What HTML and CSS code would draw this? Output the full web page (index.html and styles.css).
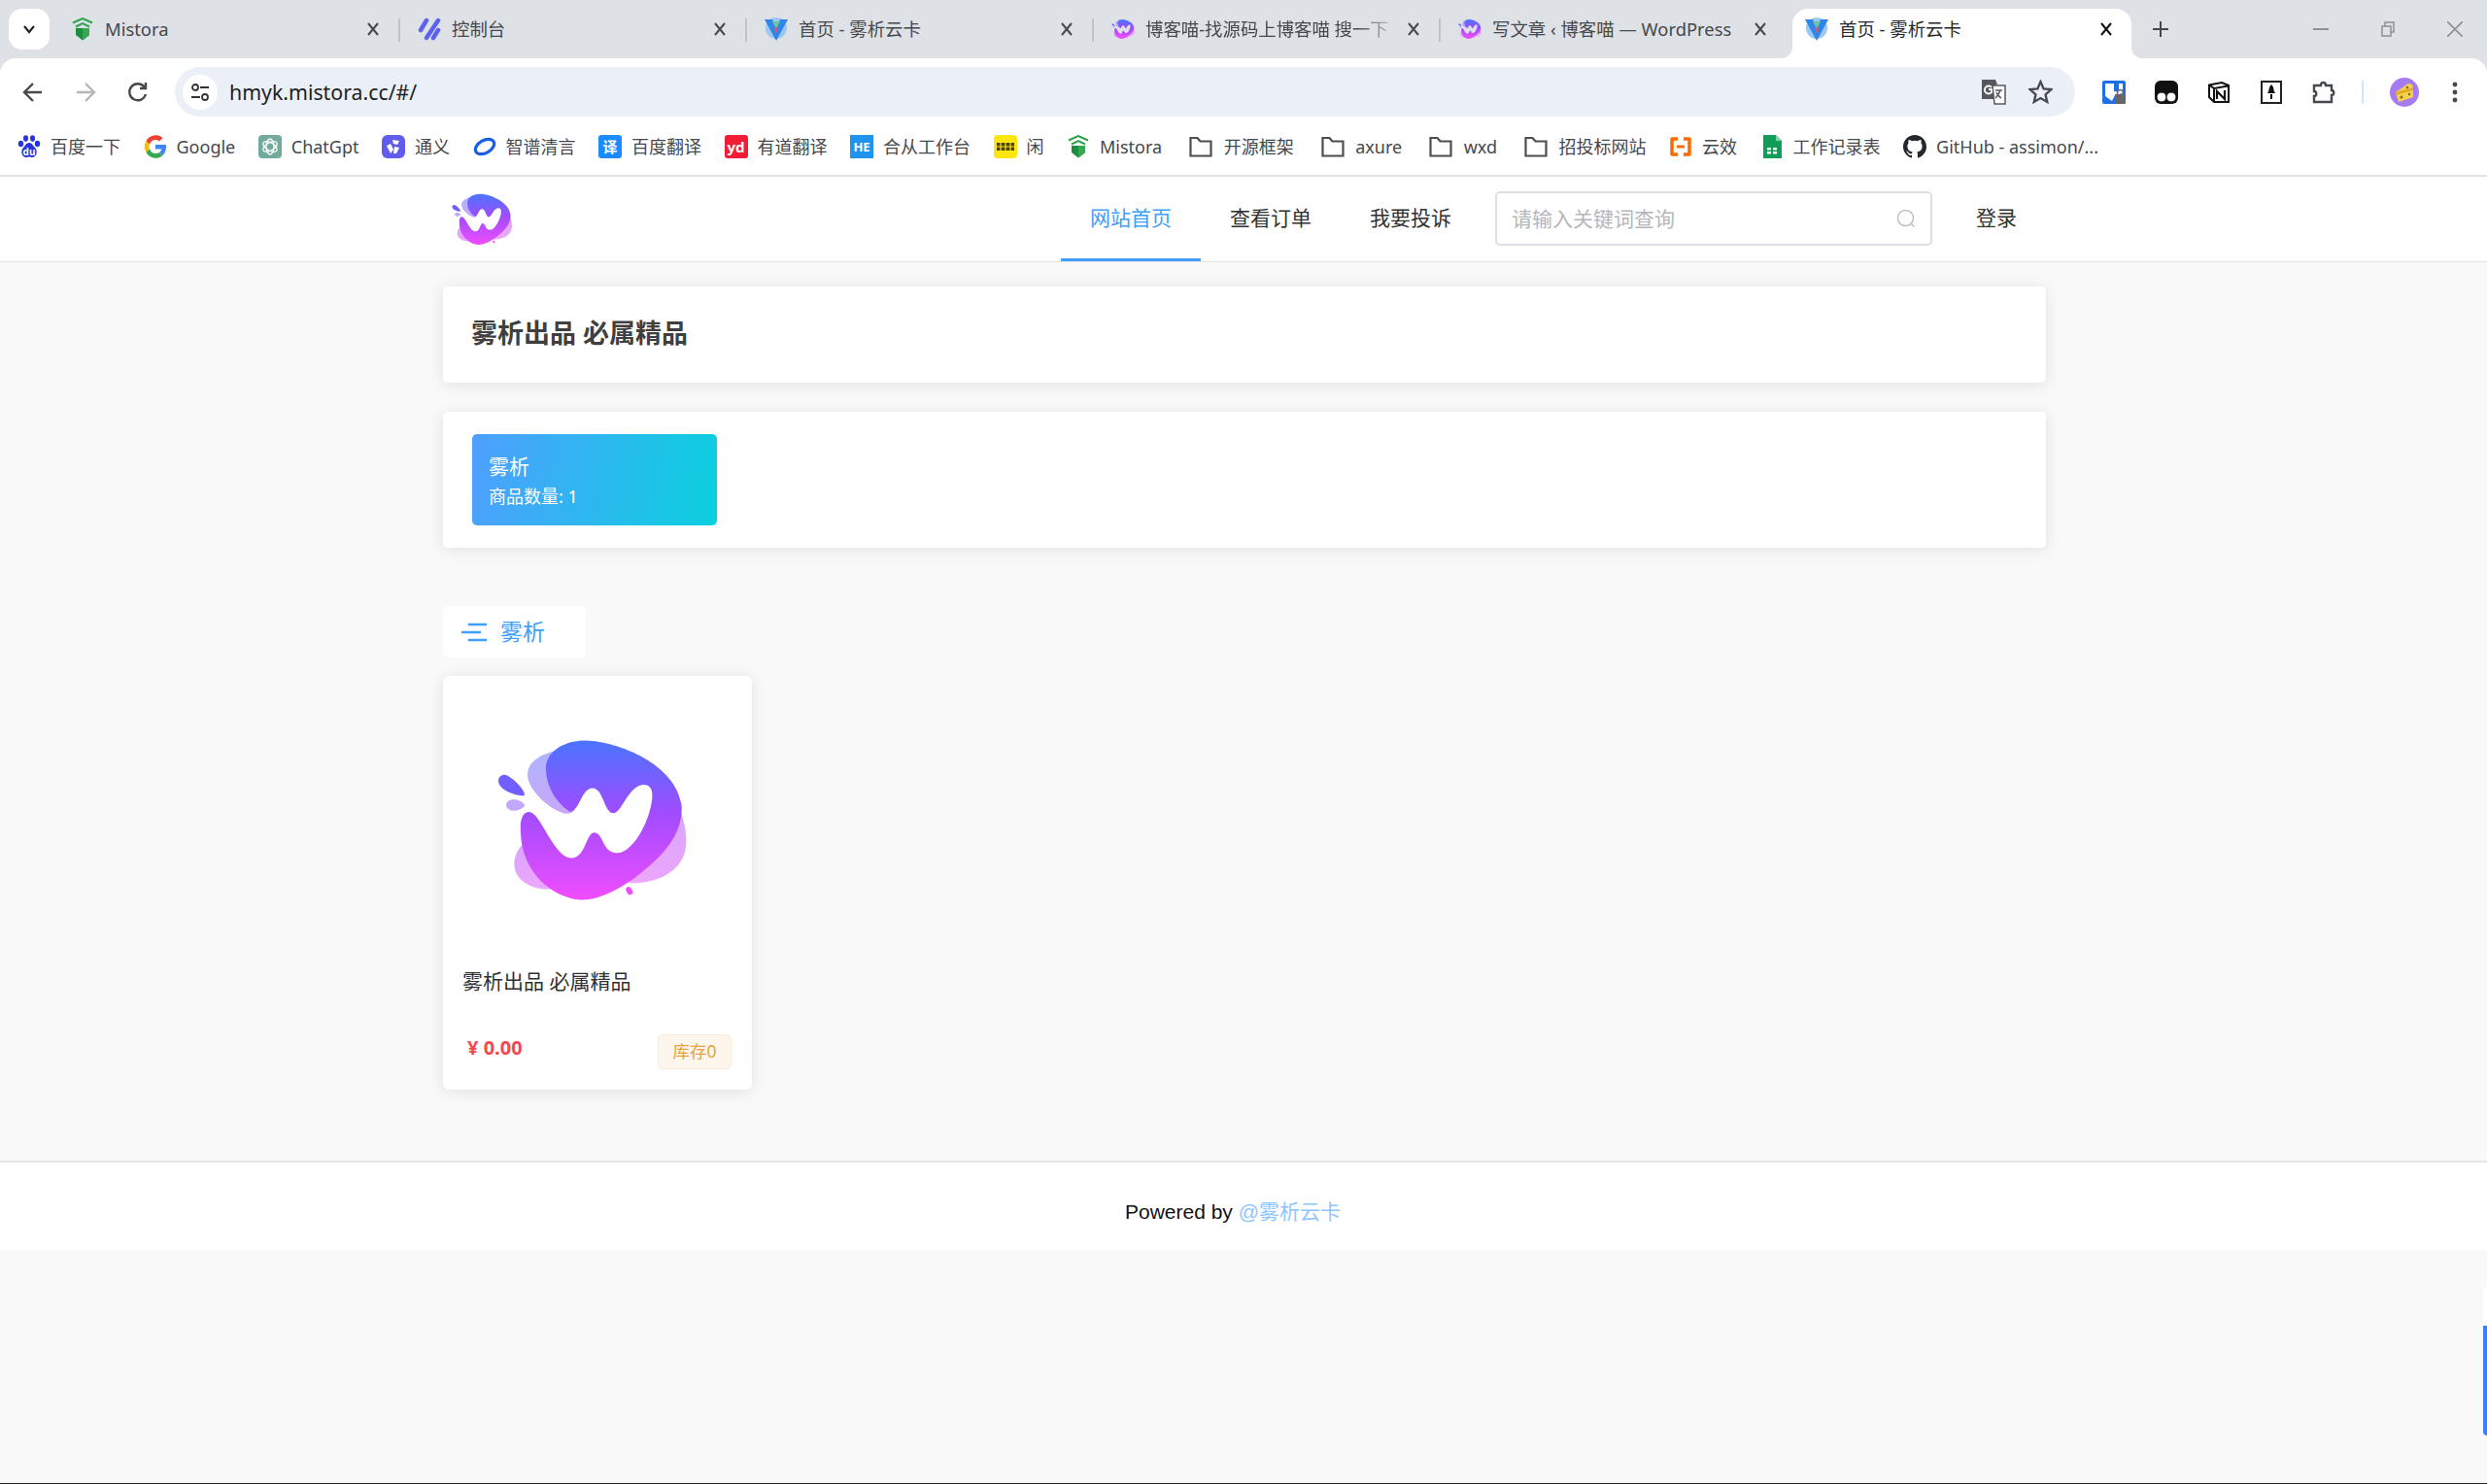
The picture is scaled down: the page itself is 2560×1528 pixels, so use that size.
FILE: index.html
```html
<!DOCTYPE html>
<html lang="zh-CN">
<head>
  <meta charset="UTF-8" />
  <title>首页 - 雾析云卡</title>
  <link rel="stylesheet" href="styles.css">
</head>
<body>
  <svg class="defs" width="0" height="0">
    <defs>
      <linearGradient id="wMain" x1="0" y1="0" x2="0" y2="1">
        <stop offset="0" stop-color="#4a74ff"/>
        <stop offset="0.45" stop-color="#a04cff"/>
        <stop offset="1" stop-color="#f04dff"/>
      </linearGradient>
      <linearGradient id="wBackTop" x1="0" y1="0" x2="0" y2="1">
        <stop offset="0" stop-color="#b0b3ff"/>
        <stop offset="1" stop-color="#c6a8fa"/>
      </linearGradient>
      <linearGradient id="wBackBottom" x1="0" y1="0" x2="0" y2="1">
        <stop offset="0" stop-color="#d8a6fb"/>
        <stop offset="1" stop-color="#eca6fd"/>
      </linearGradient>
      <symbol id="wLogo" viewBox="180 210 595 510">
        <path fill="url(#wBackTop)" d="M360 250C315 262 280 285 279 322C280 370 345 430 395 443C410 445 420 440 425 430L360 250Z"/>
        <path fill="url(#wBackBottom)" d="M750 430C770 480 775 530 765 565C745 630 670 662 590 658L700 540Z"/>
        <path fill="url(#wBackBottom)" d="M268 535C250 550 238 575 238 600C240 650 290 680 355 677L310 600Z"/>
        <path fill="url(#wMain)" d="M410 437C360 405 335 350 336 300C340 240 410 215 460 217C560 220 740 290 756 420C760 520 680 590 600 650C540 690 490 712 440 710C350 700 260 620 258 500C255 460 265 438 285 438C320 440 360 580 415 581C460 580 460 500 487 502C515 505 510 565 555 565C610 565 665 450 665 385C665 360 650 352 635 354C590 360 570 442 545 442C515 440 515 365 480 364C445 365 440 437 410 437Z"/>
        <path fill="#7160ff" d="M189 342C189 326 205 319 218 326C242 340 265 365 270 382C272 390 260 388 245 385C215 378 189 362 189 342Z"/>
        <path fill="#c4a8fb" d="M213 416C213 404 228 398 243 400C256 403 268 410 271 418C265 428 250 435 235 434C222 433 213 426 213 416Z"/>
        <ellipse fill="#ee4dff" cx="594" cy="682" rx="9" ry="13" transform="rotate(-30 594 682)"/>
      </symbol>
      <symbol id="shield" viewBox="0 0 24 24">
        <path fill="#1e8e3e" d="M5 11h14v7l-7 5.500L5 18z"/>
        <path fill="#37a655" d="M12 11h7v7l-7 5.500z"/>
        <path fill="none" stroke="#2fa24c" stroke-width="2" d="M2 5.500 12 1l10 4.500M5 9.500 12 6l7 3.500"/>
      </symbol>
      <symbol id="vue" viewBox="0 0 24 24">
        <circle cx="12" cy="11" r="11" fill="#9cc8f2"/>
        <path fill="#2f86ea" d="M0 2h8l4 9 4-9h8L12 24z"/>
        <path fill="#6fc3a0" d="M8 4h8l-4 8z"/>
        <path fill="#ef5350" d="M12 9l1.500 3-1.500 5-1.500-5z"/>
      </symbol>
      <symbol id="close" viewBox="0 0 12 14">
        <path fill="none" stroke="currentColor" stroke-width="2" d="M1 1l10 12M11 1 1 13"/>
      </symbol>
      <symbol id="folder" viewBox="0 0 24 24">
        <path fill="none" stroke="#4a4d51" stroke-width="2.200" d="M1.500 3h7l3 3.500h11v15h-21z"/>
      </symbol>
    </defs>
  </svg>

  <div class="page">
    <div class="browser">
      <div class="tabstrip">
        <div class="tab-search">
          <svg viewBox="0 0 14 10" width="14" height="10"><path fill="none" stroke="#222" stroke-width="2.200" d="M2 2l5 6 5-6"/></svg>
        </div>

        <div class="tab">
          <svg class="favicon"><use href="#shield"/></svg>
          <span class="tab-title">Mistora</span>
          <svg class="tab-close"><use href="#close"/></svg>
        </div>
        <i class="tab-sep"></i>

        <div class="tab">
          <svg class="favicon" viewBox="0 0 24 24"><path stroke="#5d63ee" stroke-width="4.500" stroke-linecap="round" fill="none" d="M3 13 9 3M9 21 21 3M16 21l5-8"/></svg>
          <span class="tab-title">控制台</span>
          <svg class="tab-close"><use href="#close"/></svg>
        </div>
        <i class="tab-sep"></i>

        <div class="tab">
          <svg class="favicon"><use href="#vue"/></svg>
          <span class="tab-title">首页 - 雾析云卡</span>
          <svg class="tab-close"><use href="#close"/></svg>
        </div>
        <i class="tab-sep"></i>

        <div class="tab">
          <svg class="favicon"><use href="#wLogo"/></svg>
          <span class="tab-title tab-fade">博客喵-找源码上博客喵 搜一下</span>
          <svg class="tab-close"><use href="#close"/></svg>
        </div>
        <i class="tab-sep"></i>

        <div class="tab">
          <svg class="favicon"><use href="#wLogo"/></svg>
          <span class="tab-title">写文章 ‹ 博客喵 — WordPress</span>
          <svg class="tab-close"><use href="#close"/></svg>
        </div>
        <i class="tab-sep hidden"></i>

        <div class="tab active">
          <svg class="favicon"><use href="#vue"/></svg>
          <span class="tab-title">首页 - 雾析云卡</span>
          <svg class="tab-close"><use href="#close"/></svg>
        </div>

        <svg class="tab-new" viewBox="0 0 16 16"><path fill="none" stroke="#45484c" stroke-width="2" d="M8 0v16M0 8h16"/></svg>

        <div class="win-controls">
          <svg viewBox="0 0 16 16" width="16" height="16"><path stroke="#8d9095" stroke-width="2" d="M0 8h16"/></svg>
          <svg viewBox="0 0 16 16" width="16" height="16"><path fill="none" stroke="#8d9095" stroke-width="1.500" d="M2 5h9v10H2zM5 5V1h9v10h-3"/></svg>
          <svg viewBox="0 0 16 16" width="16" height="16"><path fill="none" stroke="#8d9095" stroke-width="1.600" d="M0 0l16 16M16 0 0 16"/></svg>
        </div>
      </div>

      <div class="toolbar">
        <div class="nav-btns">
          <svg viewBox="0 0 24 24" width="24" height="24"><path fill="none" stroke="#45484c" stroke-width="2.400" d="M21 12H4M12 3l-9 9 9 9"/></svg>
          <svg viewBox="0 0 24 24" width="24" height="24"><path fill="none" stroke="#b4b6b9" stroke-width="2.400" d="M3 12h17M12 3l9 9-9 9"/></svg>
          <svg viewBox="0 0 24 24" width="24" height="24"><path fill="none" stroke="#45484c" stroke-width="2.400" d="M20 14a8.500 8.500 0 1 1-1.500-7.500M20 2v6h-6"/></svg>
        </div>
        <div class="omnibox">
          <div class="site-info">
            <svg viewBox="0 0 20 20" width="20" height="20"><circle cx="5" cy="5" r="3" fill="none" stroke="#333" stroke-width="1.800"/><path stroke="#333" stroke-width="1.800" d="M10 5h9M1 15h9"/><circle cx="15" cy="15" r="3" fill="none" stroke="#333" stroke-width="1.800"/></svg>
          </div>
          <span class="url">hmyk.mistora.cc/#/</span>
          <div class="omni-actions">
            <svg viewBox="0 0 25 26" width="25" height="26"><path fill="#55585c" d="M0 0h14l2 5h-2l2 5v10H0z"/><path fill="#fff" stroke="#55585c" stroke-width="1.500" d="M11 6h13v19H13z"/><path fill="none" stroke="#fff" stroke-width="1.800" d="M10 8a4 4 0 1 0 0 5V10H7"/><path fill="none" stroke="#55585c" stroke-width="1.500" d="M14 11h7M19 11c-1 4-3 6-5 8M15 13c1 3 3 5 5 6"/></svg>
            <svg viewBox="0 0 24 24" width="25" height="25"><path fill="none" stroke="#45484c" stroke-width="2.200" d="M12 2l3 7 7.500.7-5.700 5 1.700 7.300L12 18.200 5.500 22l1.700-7.300-5.700-5L9 9z"/></svg>
          </div>
        </div>
        <div class="extensions">
          <svg viewBox="0 0 24 24" width="24" height="24"><rect width="24" height="24" rx="2" fill="#1f6fe5"/><path fill="#fff" d="M3 3h18v10l-8 2-3 6-7-5z"/><path fill="#1f6fe5" d="M12 3h5v8h-5z"/><rect x="13" y="14" width="11" height="10" rx="1" fill="#666"/><path fill="none" stroke="#666" stroke-width="1.600" d="M15.500 15v-2.500a3 3 0 0 1 6 0V15"/></svg>
          <svg viewBox="0 0 24 24" width="24" height="24"><rect width="24" height="24" rx="6" fill="#111"/><circle cx="7" cy="17" r="5" fill="#fff" stroke="#111" stroke-width="1"/><circle cx="17" cy="17" r="5" fill="#fff" stroke="#111" stroke-width="1"/></svg>
          <svg viewBox="0 0 24 24" width="24" height="24"><path fill="#fff" stroke="#111" stroke-width="2" d="M2 4.500 15 2l7 3v17H7l-5-5z"/><path stroke="#111" stroke-width="2" fill="none" d="M2 4.500 7 8l15-2.500M7 8v14"/><path stroke="#111" stroke-width="2.200" fill="none" d="M10 19V11l8 8v-9"/></svg>
          <svg viewBox="0 0 24 24" width="24" height="24"><rect x="2" y="1" width="20" height="22" fill="#fff" stroke="#222" stroke-width="2"/><path fill="#111" d="M12 4c2 2 2.500 4 2.500 6l1.500 3H8l1.500-3c0-2 .5-4 2.500-6zM11 14h2v5h-2z"/></svg>
          <svg viewBox="0 0 24 24" width="24" height="24"><path fill="none" stroke="#45484c" stroke-width="2.400" d="M2 5h7c0-4 5-4 5 0h6v5c3 0 3 5 0 5v7H2v-6c3 0 3-5 0-5z"/></svg>
          <i class="ext-sep"></i>
          <svg class="avatar" viewBox="0 0 30 30" width="30" height="30"><circle cx="15" cy="15" r="15" fill="#a77bf0"/><path fill="#f5d04a" d="M6 15 19 6c3 0 5 2 5 4v10L9 25z"/><path fill="#e0ad2a" d="M6 15l18-5v3L6 18z"/><circle cx="18" cy="10" r="1.300" fill="#8d6a14"/><circle cx="20" cy="17" r="1.300" fill="#8d6a14"/><circle cx="12" cy="20" r="1.500" fill="#8d6a14"/></svg>
          <svg class="dots" viewBox="0 0 6 24" width="6" height="24"><circle cx="3" cy="4" r="2.400" fill="#45484c"/><circle cx="3" cy="12" r="2.400" fill="#45484c"/><circle cx="3" cy="20" r="2.400" fill="#45484c"/></svg>
        </div>
      </div>

      <div class="bookmarks">
        <a class="bm"><svg viewBox="0 0 24 24"><ellipse cx="8.500" cy="3.500" rx="2.500" ry="3.300" fill="#2932e1"/><ellipse cx="15.500" cy="3.500" rx="2.500" ry="3.300" fill="#2932e1"/><ellipse cx="3.500" cy="9" rx="2.700" ry="3.300" fill="#2932e1"/><ellipse cx="20.500" cy="9" rx="2.700" ry="3.300" fill="#2932e1"/><path fill="#2932e1" d="M12 8c3 0 4 3 6 5 3 3 2 10-3 10-1.500 0-2-.5-3-.5s-1.500.5-3 .5c-5 0-6-7-3-10 2-2 3-5 6-5z"/><text class="bm-du" x="12" y="21" text-anchor="middle">du</text></svg>百度一下</a>
        <a class="bm"><svg viewBox="0 0 24 24"><path fill="#ea4335" d="M12 5c2 0 3 .7 4 1.500L19.500 3A11 11 0 0 0 2.300 6.500L6 9.500C7 7 9.300 5 12 5z"/><path fill="#fbbc05" d="M2.300 6.500a11 11 0 0 0 0 11L6 14.500a7 7 0 0 1 0-5z"/><path fill="#34a853" d="M12 19c-2.700 0-5-1.800-6-4.500l-3.700 3A11 11 0 0 0 19.500 21l-3.500-3c-1 .7-2.500 1-4 1z"/><path fill="#4285f4" d="M23 12c0-.8 0-1.300-.2-2H12v4.500h6.300c-.4 1.500-1.200 2.700-2.300 3.500l3.500 3C21.700 19 23 16 23 12z"/></svg>Google</a>
        <a class="bm"><svg viewBox="0 0 24 24"><rect width="24" height="24" rx="4" fill="#74aa9c"/><g fill="none" stroke="#fff" stroke-width="1.300"><ellipse cx="12" cy="12" rx="4" ry="8"/><ellipse cx="12" cy="12" rx="4" ry="8" transform="rotate(60 12 12)"/><ellipse cx="12" cy="12" rx="4" ry="8" transform="rotate(120 12 12)"/></g></svg>ChatGpt</a>
        <a class="bm"><svg viewBox="0 0 24 24"><rect width="24" height="24" rx="6" fill="#615ced"/><path fill="#fff" d="M11 5l7 1-2 4-4-1zM5 11l4-2 3 6-3 4zM13 12l5 1-3 6h-3z"/></svg>通义</a>
        <a class="bm"><svg viewBox="0 0 24 24"><ellipse cx="12" cy="12" rx="10.500" ry="6.500" fill="none" stroke="#1c5fe0" stroke-width="3.200" transform="rotate(-30 12 12)"/></svg>智谱清言</a>
        <a class="bm"><b class="bm-box bm-blue">译</b>百度翻译</a>
        <a class="bm"><b class="bm-box bm-red">yd</b>有道翻译</a>
        <a class="bm"><b class="bm-box bm-he">HE</b>合从工作台</a>
        <a class="bm"><svg viewBox="0 0 24 24"><rect width="24" height="24" rx="4" fill="#ffe60f"/><rect x="3" y="8" width="18" height="8" fill="#4a4210"/><path stroke="#ffe60f" stroke-width="1.200" d="M7 8v8M12 8v8M17 8v8M3 12h18"/></svg>闲</a>
        <a class="bm"><svg><use href="#shield"/></svg>Mistora</a>
        <a class="bm bm-folder"><svg><use href="#folder"/></svg>开源框架</a>
        <a class="bm bm-folder"><svg><use href="#folder"/></svg>axure</a>
        <a class="bm bm-folder"><svg><use href="#folder"/></svg>wxd</a>
        <a class="bm bm-folder"><svg><use href="#folder"/></svg>招投标网站</a>
        <a class="bm"><svg viewBox="0 0 24 24"><path fill="none" stroke="#ff6a00" stroke-width="3.500" stroke-linejoin="round" d="M9 4H3v16h6M15 4h6v16h-6"/><path stroke="#ff6a00" stroke-width="3" d="M8 12h8"/></svg>云效</a>
        <a class="bm"><svg viewBox="0 0 24 24"><path fill="#0f9d58" d="M3 0h13l6 6v18H3z"/><path fill="#87ceac" d="M16 0l6 6h-6z"/><path fill="#fff" d="M7 13h4v2.500H7zM13 13h4v2.500h-4zM7 17h4v2.500H7zM13 17h4v2.500h-4z"/></svg>工作记录表</a>
        <a class="bm"><svg viewBox="0 0 24 24"><path fill="#24292f" d="M12 0C5.400 0 0 5.400 0 12c0 5.300 3.400 9.800 8.200 11.400.6.100.8-.3.800-.6v-2c-3.300.7-4-1.600-4-1.600-.5-1.400-1.300-1.800-1.300-1.800-1.100-.7.100-.7.100-.7 1.200.1 1.800 1.200 1.800 1.200 1.100 1.800 2.800 1.300 3.500 1 .1-.8.400-1.300.8-1.600-2.700-.3-5.500-1.300-5.500-5.900 0-1.300.5-2.400 1.200-3.200-.1-.3-.5-1.500.1-3.200 0 0 1-.3 3.300 1.200a11.500 11.500 0 0 1 6 0C17.300 4.700 18.300 5 18.300 5c.7 1.700.2 2.900.1 3.200.8.800 1.200 1.900 1.200 3.200 0 4.600-2.800 5.600-5.500 5.900.4.400.8 1.100.8 2.200v3.300c0 .3.200.7.800.6C20.600 21.800 24 17.300 24 12c0-6.600-5.400-12-12-12z"/></svg>GitHub - assimon/...</a>
      </div>
    </div>

    <header class="site-header">
      <div class="container header-inner">
        <svg class="site-logo"><use href="#wLogo"/></svg>
        <nav class="site-nav">
          <a class="nav-item current">网站首页</a>
          <a class="nav-item">查看订单</a>
          <a class="nav-item">我要投诉</a>
        </nav>
        <div class="search-box">
          <span class="search-text">请输入关键词查询</span>
          <svg viewBox="0 0 20 20" width="20" height="20"><circle cx="9.500" cy="9.500" r="8" fill="none" stroke="#bcbec2" stroke-width="1.500"/><path stroke="#bcbec2" stroke-width="1.500" d="M15 15l3.500 3.500"/></svg>
        </div>
        <a class="login">登录</a>
      </div>
    </header>

    <main class="content">
      <div class="container">
        <div class="card notice">雾析出品 必属精品</div>

        <div class="card groups">
          <div class="group-tile">
            <div class="group-name">雾析</div>
            <div class="group-count">商品数量: 1</div>
          </div>
        </div>

        <div class="cat-label">
          <svg viewBox="0 0 26 20" width="26" height="20"><path stroke="#409eff" stroke-width="2.400" d="M7 2h19M0 10h20M7 18h19"/></svg>
          <span class="cat-text">雾析</span>
        </div>

        <div class="product">
          <svg class="product-logo"><use href="#wLogo"/></svg>
          <div class="product-name">雾析出品 必属精品</div>
          <div class="product-foot">
            <span class="price">¥ 0.00</span>
            <span class="stock">库存0</span>
          </div>
        </div>
      </div>
    </main>

    <footer class="site-footer">Powered by <a class="footer-link">@雾析云卡</a></footer>

    <div class="side-widget"></div>
  </div>
</body>
</html>
```
FILE: styles.css
```css
* { box-sizing: border-box; }
html, body { margin: 0; padding: 0; }
body {
  font-family: "Noto Sans", "Noto Sans CJK SC", sans-serif;
  background: #f9f9f9;
  color: #303133;
}
.defs { position: absolute; }
.page {
  position: relative;
  height: 1528px;
  overflow: hidden;
  border-bottom: 1px solid #222;
}

/* browser chrome */
.browser { background: #dee1e6; }
.tabstrip {
  display: flex;
  align-items: flex-start;
  height: 60px;
  padding-top: 9px;
  font-size: 18.400px;
  color: #45484c;
}
.tab-search {
  display: flex;
  align-items: center;
  justify-content: center;
  width: 42px;
  height: 42px;
  margin: 0 4px 0 9px;
  background: #fff;
  border-radius: 14px;
}
.tab {
  position: relative;
  display: flex;
  align-items: center;
  width: 355px;
  height: 51px;
  padding: 0 14px 9px 18px;
}
.favicon { width: 24px; height: 24px; flex: none; }
.tab-title {
  flex: 1;
  margin-left: 11px;
  white-space: nowrap;
  line-height: 30px;
}
.tab-fade {
  -webkit-mask-image: linear-gradient(90deg, #000 82%, transparent);
  mask-image: linear-gradient(90deg, #000 82%, transparent);
}
.tab-close { width: 12px; height: 14px; margin: 0 6px; flex: none; color: #45484c; }
.tab-sep { flex: none; width: 2px; height: 24px; margin-top: 10px; background: #bfc2c6; }
.tab-sep.hidden { visibility: hidden; }
.tab.active {
  width: 349px;
  margin-left: 5px;
  padding-left: 13px;
  background: #fff;
  border-radius: 16px 16px 0 0;
  color: #26282b;
}
.tab.active .tab-close { color: #111; }
.tab.active::before,
.tab.active::after {
  content: "";
  position: absolute;
  bottom: 0;
  width: 12px;
  height: 12px;
}
.tab.active::before {
  left: -12px;
  background: radial-gradient(circle at 0 0, transparent 12px, #fff 12.500px);
}
.tab.active::after {
  right: -12px;
  background: radial-gradient(circle at 100% 0, transparent 12px, #fff 12.500px);
}
.tab-new { width: 16px; height: 16px; margin: 13px 0 0 22px; flex: none; }
.win-controls {
  display: flex;
  gap: 53px;
  margin: 13px 25px 0 auto;
}

.toolbar {
  display: flex;
  height: 60px;
  padding: 9px 21px 0 22px;
  background: #fff;
  border-radius: 16px 16px 0 0;
}
.nav-btns {
  display: flex;
  align-items: center;
  gap: 30px;
  height: 51px;
}
.omnibox {
  display: flex;
  align-items: center;
  flex: 1;
  height: 51px;
  margin-left: 26px;
  padding: 0 23px 0 8px;
  background: #ebeff8;
  border-radius: 26px;
}
.site-info {
  display: flex;
  align-items: center;
  justify-content: center;
  width: 36px;
  height: 36px;
  background: #fff;
  border-radius: 50%;
}
.url {
  margin-left: 12px;
  font-size: 21.300px;
  color: #1f1f1f;
}
.omni-actions {
  display: flex;
  align-items: center;
  gap: 23px;
  margin-left: auto;
}
.extensions {
  display: flex;
  align-items: center;
  gap: 30px;
  height: 51px;
  margin-left: 28px;
}
.ext-sep { width: 2px; height: 24px; margin-left: -3px; background: #d3e3fd; }
.avatar { margin-left: -3px; }
.dots { margin-left: 4px; margin-right: 9px; }

.bookmarks {
  display: flex;
  align-items: center;
  gap: 23.500px;
  height: 60px;
  padding: 2px 0 0 18px;
  background: #fff;
  font-size: 18px;
  color: #45484c;
  white-space: nowrap;
}
.bm { display: flex; align-items: center; gap: 10px; line-height: 24px; }
.bm svg { width: 24px; height: 24px; flex: none; }
.bm-folder { gap: 11.500px; margin-left: 4.500px; }
.bm-du { font-size: 10px; font-weight: 700; fill: #fff; }
.bm-box {
  display: flex;
  align-items: center;
  justify-content: center;
  width: 24px;
  height: 24px;
  border-radius: 3px;
  color: #fff;
  font-size: 15px;
  font-weight: 700;
}
.bm-blue { background: #1a8cff; }
.bm-red { background: #f01d35; }
.bm-he { background: #1f94ee; border-radius: 0; font-size: 13px; }

/* site */
.container { width: 1650px; margin-left: 456px; }
.site-header {
  height: 90px;
  background: #fff;
  border-top: 2px solid #e3e3e3;
  border-bottom: 1px solid #e3e3e6;
}
.header-inner { display: flex; align-items: stretch; height: 87px; }
.site-logo { width: 64px; height: 54px; margin: 17px 0 0 8px; }
.site-nav { display: flex; margin-left: auto; }
.nav-item {
  display: flex;
  align-items: center;
  height: 87px;
  padding: 0 30px 5px;
  font-size: 21px;
  color: #303133;
}
.nav-item.current {
  color: #409eff;
  border-bottom: 3px solid #409eff;
  padding-bottom: 2px;
}
.search-box {
  display: flex;
  align-items: center;
  justify-content: space-between;
  width: 450px;
  height: 56px;
  margin: 15px 0 0 15px;
  padding: 0 15px 0 15px;
  border: 2px solid #dcdfe6;
  border-radius: 5px;
}
.search-text { font-size: 21px; color: #b4b6bb; padding-bottom: 2px; }
.login {
  align-self: center;
  margin: 0 30px 0 45px;
  padding-bottom: 5px;
  font-size: 21px;
  color: #303133;
}

.content { height: 925px; padding-top: 25px; }
.card {
  background: #fff;
  border-radius: 5px;
  box-shadow: 0 2px 16px rgba(0,0,0,.1);
}
.notice {
  height: 99px;
  padding: 0 29px;
  line-height: 96px;
  font-size: 27px;
  font-weight: 700;
  color: #3f3f3f;
}
.groups {
  height: 140px;
  margin-top: 30px;
  padding: 23px 30px;
}
.group-tile {
  width: 252px;
  height: 94px;
  padding: 17px 17px 0;
  border-radius: 5px;
  background: linear-gradient(100deg, #4f9fff, #0bd0de);
  color: #fff;
}
.group-name { font-size: 21px; line-height: 32px; }
.group-count { font-size: 18px; line-height: 30px; }
.cat-label {
  display: flex;
  align-items: center;
  gap: 14px;
  width: 147px;
  height: 53px;
  margin-top: 60px;
  padding-left: 19px;
  background: #fff;
  border-radius: 5px;
  font-size: 23px;
  color: #409eff;
}
.cat-text { padding-bottom: 3px; }
.product {
  width: 318px;
  height: 426px;
  margin-top: 19px;
  padding: 64px 21px 0;
  background: #fff;
  border-radius: 6px;
  box-shadow: 0 2px 16px rgba(0,0,0,.1);
}
.product-logo { display: block; width: 198px; height: 170px; margin-left: 33px; }
.product-name {
  margin: 65px 0 0 -1px;
  font-size: 21px;
  line-height: 30px;
  color: #303133;
}
.product-foot {
  display: flex;
  align-items: flex-start;
  justify-content: space-between;
  margin-top: 40px;
  padding-left: 4px;
}
.price {
  font-size: 20px;
  font-weight: 700;
  line-height: 28px;
  color: #f4494f;
}
.stock {
  width: 76px;
  height: 36px;
  line-height: 32px;
  text-align: center;
  font-size: 17.500px;
  color: #e6a23c;
  background: #fdf6ec;
  border: 1px solid #faecd8;
  border-radius: 5px;
}

.site-footer {
  height: 92px;
  padding: 36px 22px 0 0;
  background: #fff;
  border-top: 2px solid #e3e3e8;
  text-align: center;
  font-family: "Liberation Sans", "Noto Sans CJK SC", sans-serif;
  font-size: 21px;
  line-height: 30px;
  color: #111;
}
.footer-link { color: #8cc5ff; }

.side-widget {
  position: absolute;
  right: 0;
  top: 1326px;
  width: 4px;
  height: 152px;
  background: linear-gradient(#fff 39px, #3f7ff5 39px);
  border-radius: 10px 0 0 10px;
}
```
